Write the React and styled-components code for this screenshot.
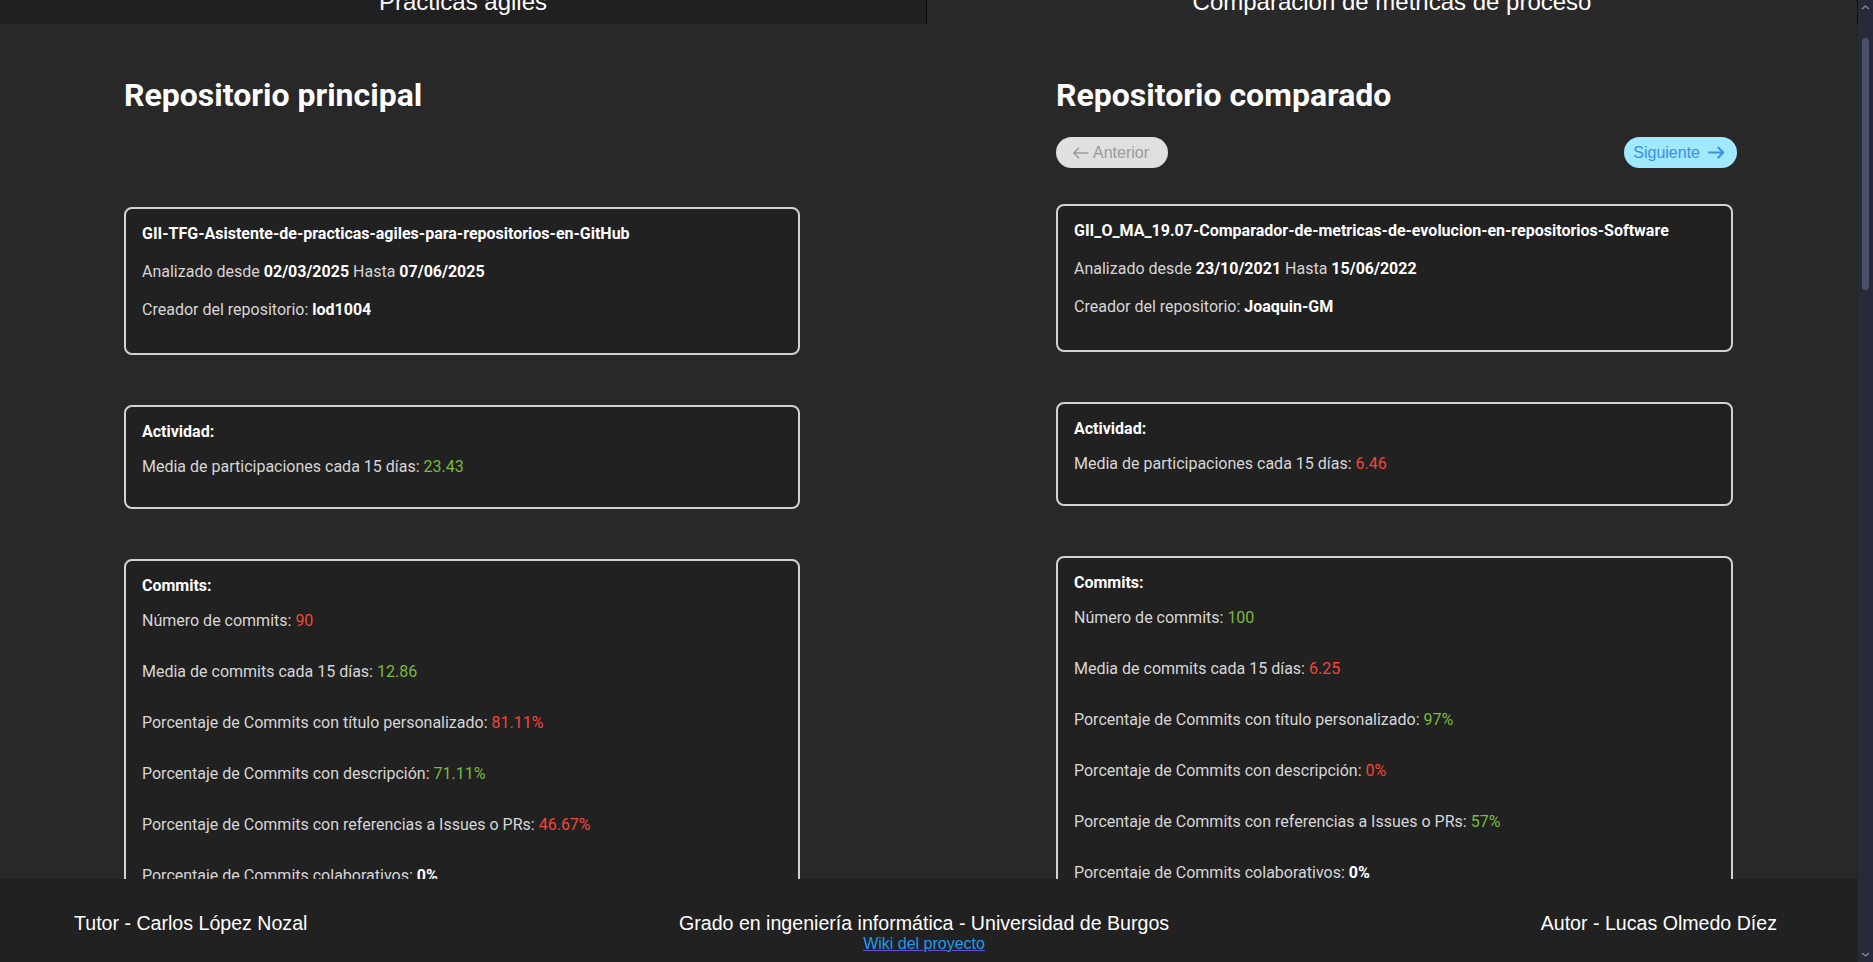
import React from "react";
import styled, { createGlobalStyle } from "styled-components";

const GlobalStyle = createGlobalStyle`
  html, body {
    margin: 0;
    padding: 0;
    height: 100%;
    overflow: hidden;
    background: #282828;
  }
  #root { height: 100%; }
  *, *::before, *::after { box-sizing: border-box; }
`;

const GREEN = "#79b93d";
const RED = "#f2463b";

const Shell = styled.div`
  display: flex;
  width: 100vw;
  height: 100vh;
  background: #282828;
`;

const Page = styled.div`
  flex: 1;
  min-width: 0;
  display: flex;
  flex-direction: column;
`;

const TabBar = styled.nav`
  display: grid;
  grid-template-columns: 927px 1fr;
  height: 24px;
  flex-shrink: 0;
  overflow: hidden;
`;

const Tab = styled.div`
  display: flex;
  justify-content: center;
  align-items: flex-start;
  background: ${(p) => (p.$active ? "#292929" : "#202020")};
  border-right: 1px solid #101010;
  color: #ffffff;
  font-family: "Liberation Sans", Arial, sans-serif;
  font-size: 24px;
`;

const TabLabel = styled.span`
  margin-top: -12px;
  line-height: normal;
`;

const Main = styled.main`
  flex: 1;
  min-height: 0;
  overflow: hidden;
  display: grid;
  grid-template-columns: 676px 677px;
  column-gap: 256px;
  align-content: start;
  align-items: start;
  padding: 53px 0 0 124px;
  font-family: Roboto, "Noto Sans", sans-serif;
`;

const Column = styled.section`
  display: flex;
  flex-direction: column;
`;

const Heading = styled.h1`
  margin: 0;
  font-family: Roboto, "Noto Sans", sans-serif;
  font-weight: 700;
  font-size: 32px;
  line-height: 37px;
  color: #ffffff;
`;

const NavRow = styled.div`
  display: flex;
  justify-content: space-between;
  align-items: center;
  height: ${(p) => (p.$empty ? 34 : 31)}px;
  margin: 23px -4px 36px 0;
`;

const PillButton = styled.button`
  display: inline-flex;
  align-items: center;
  gap: ${(p) => (p.$primary ? 8 : 4)}px;
  height: 31px;
  padding: ${(p) => (p.$primary ? "0 12px 0 9px" : "0 19px 0 16px")};
  border: none;
  border-radius: 16px;
  background: ${(p) => (p.$primary ? "#a0e9ff" : "#e0e0e0")};
  color: ${(p) => (p.$primary ? "#3c8fe2" : "#9a9a9a")};
  font-family: "Liberation Sans", Arial, sans-serif;
  font-size: 16px;
  cursor: ${(p) => (p.$primary ? "pointer" : "default")};
`;

const CardStack = styled.div`
  display: flex;
  flex-direction: column;
  gap: 50px;
`;

const Card = styled.div`
  display: flex;
  flex-direction: column;
  gap: ${(p) => p.$gap}px;
  padding: 15px 16px ${(p) => p.$pb}px;
  background: #212121;
  border: 2px solid #d2d2d2;
  border-radius: 8px;
  color: #d6d6d6;
  font-size: 16px;
  line-height: 19px;
`;

const CardTitle = styled.div`
  font-weight: 700;
  color: #ffffff;
`;

const Line = styled.div`
  white-space: nowrap;
`;

const Strong = styled.span`
  font-weight: 700;
  color: #ffffff;
`;

const Value = styled.span`
  color: ${(p) => (p.$good ? GREEN : RED)};
`;

const MetricList = styled.div`
  display: flex;
  flex-direction: column;
  gap: 32px;
`;

const Footer = styled.footer`
  flex-shrink: 0;
  height: 83px;
  display: flex;
  justify-content: space-between;
  align-items: flex-start;
  padding: 33px 81px 0 74px;
  background: #212121;
  color: #ffffff;
  font-family: "Liberation Sans", Arial, sans-serif;
  font-size: 19.6px;
`;

const FooterCenter = styled.div`
  display: flex;
  flex-direction: column;
  align-items: center;
`;

const WikiLink = styled.a`
  font-size: 16px;
  color: #1e9bf0;
  text-decoration: underline;
  text-decoration-color: #6b4fd8;
`;

const ScrollTrack = styled.div`
  width: 15px;
  flex-shrink: 0;
  display: flex;
  flex-direction: column;
  align-items: center;
  background: #272a37;
`;

const ScrollArrow = styled.div`
  height: 15px;
  display: flex;
  align-items: center;
  justify-content: center;
  margin-top: ${(p) => (p.$down ? "auto" : "0")};
`;

const ScrollThumb = styled.div`
  width: 7px;
  height: 252px;
  margin-top: 23px;
  border-radius: 4px;
  background: #4b5069;
`;

const ArrowLeft = () => (
  <svg width="17" height="12" viewBox="0 0 17 12" fill="none">
    <path d="M16 6H1.8M6.6 1.2L1.8 6l4.8 4.8" stroke="currentColor" strokeWidth="1.6" strokeLinecap="round" strokeLinejoin="round" />
  </svg>
);

const ArrowRight = () => (
  <svg width="17" height="13" viewBox="0 0 17 13" fill="none">
    <path d="M1 6.5h14.2M10.2 1.5l5 5-5 5" stroke="currentColor" strokeWidth="2" strokeLinecap="round" strokeLinejoin="round" />
  </svg>
);

const Chevron = ({ down }) => (
  <svg width="9" height="5" viewBox="0 0 9 5" fill="none">
    <path d={down ? "M1 1l3.5 3L8 1" : "M1 4l3.5-3L8 4"} stroke="#8a8fa5" strokeWidth="1.2" />
  </svg>
);

const repos = [
  {
    heading: "Repositorio principal",
    name: "GII-TFG-Asistente-de-practicas-agiles-para-repositorios-en-GitHub",
    from: "02/03/2025",
    to: "07/06/2025",
    creator: "lod1004",
    activity: { v: "23.43", good: true },
    commits: [
      { label: "Número de commits: ", v: "90", good: false },
      { label: "Media de commits cada 15 días: ", v: "12.86", good: true },
      { label: "Porcentaje de Commits con título personalizado: ", v: "81.11%", good: false },
      { label: "Porcentaje de Commits con descripción: ", v: "71.11%", good: true },
      { label: "Porcentaje de Commits con referencias a Issues o PRs: ", v: "46.67%", good: false },
      { label: "Porcentaje de Commits colaborativos: ", v: "0%", neutral: true },
    ],
  },
  {
    heading: "Repositorio comparado",
    nav: true,
    name: "GII_O_MA_19.07-Comparador-de-metricas-de-evolucion-en-repositorios-Software",
    from: "23/10/2021",
    to: "15/06/2022",
    creator: "Joaquin-GM",
    activity: { v: "6.46", good: false },
    commits: [
      { label: "Número de commits: ", v: "100", good: true },
      { label: "Media de commits cada 15 días: ", v: "6.25", good: false },
      { label: "Porcentaje de Commits con título personalizado: ", v: "97%", good: true },
      { label: "Porcentaje de Commits con descripción: ", v: "0%", good: false },
      { label: "Porcentaje de Commits con referencias a Issues o PRs: ", v: "57%", good: true },
      { label: "Porcentaje de Commits colaborativos: ", v: "0%", neutral: true },
    ],
  },
];

function RepoColumn({ repo }) {
  return (
    <Column>
      <Heading>{repo.heading}</Heading>
      {repo.nav ? (
        <NavRow>
          <PillButton disabled>
            <ArrowLeft />
            Anterior
          </PillButton>
          <PillButton $primary>
            Siguiente
            <ArrowRight />
          </PillButton>
        </NavRow>
      ) : (
        <NavRow $empty />
      )}
      <CardStack>
        <Card $gap={19} $pb={34}>
          <CardTitle>{repo.name}</CardTitle>
          <Line>
            Analizado desde <Strong>{repo.from}</Strong> Hasta <Strong>{repo.to}</Strong>
          </Line>
          <Line>
            Creador del repositorio: <Strong>{repo.creator}</Strong>
          </Line>
        </Card>
        <Card $gap={16} $pb={31}>
          <CardTitle>Actividad:</CardTitle>
          <Line>
            Media de participaciones cada 15 días:{" "}
            <Value $good={repo.activity.good}>{repo.activity.v}</Value>
          </Line>
        </Card>
        <Card $gap={16} $pb={34}>
          <CardTitle>Commits:</CardTitle>
          <MetricList>
            {repo.commits.map((c) => (
              <Line key={c.label}>
                {c.label}
                {c.neutral ? <Strong>{c.v}</Strong> : <Value $good={c.good}>{c.v}</Value>}
              </Line>
            ))}
          </MetricList>
        </Card>
      </CardStack>
    </Column>
  );
}

export default function App() {
  return (
    <>
      <GlobalStyle />
      <Shell>
        <Page>
          <TabBar>
            <Tab>
              <TabLabel>Prácticas ágiles</TabLabel>
            </Tab>
            <Tab $active>
              <TabLabel>Comparación de métricas de proceso</TabLabel>
            </Tab>
          </TabBar>
          <Main>
            {repos.map((r) => (
              <RepoColumn key={r.heading} repo={r} />
            ))}
          </Main>
          <Footer>
            <span>Tutor - Carlos López Nozal</span>
            <FooterCenter>
              <span>Grado en ingeniería informática - Universidad de Burgos</span>
              <WikiLink href="#">Wiki del proyecto</WikiLink>
            </FooterCenter>
            <span>Autor - Lucas Olmedo Díez</span>
          </Footer>
        </Page>
        <ScrollTrack>
          <ScrollArrow>
            <Chevron />
          </ScrollArrow>
          <ScrollThumb />
          <ScrollArrow $down>
            <Chevron down />
          </ScrollArrow>
        </ScrollTrack>
      </Shell>
    </>
  );
}
